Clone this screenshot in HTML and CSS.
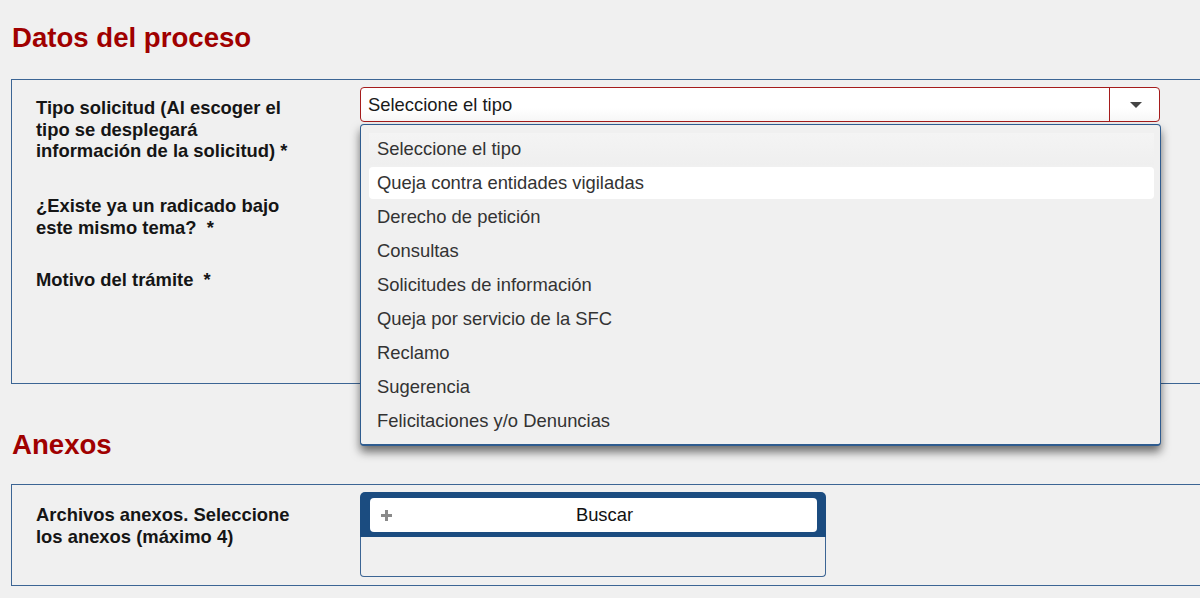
FILE: index.html
```html
<!DOCTYPE html>
<html lang="es">
<head>
<meta charset="utf-8">
<title>Datos del proceso</title>
<link rel="stylesheet" href="styles.css">
</head>
<body>
<div class="page">
  <h2 class="section-title">Datos del proceso</h2>
  <div class="panel panel-process">
    <div class="row row-tipo">
      <div class="label">Tipo solicitud (Al escoger el tipo se desplegará información de la solicitud) *</div>
      <div class="control">
        <div class="select">
          <div class="select-value">Seleccione el tipo</div>
          <div class="select-arrow"><span class="caret"></span></div>
          <ul class="dropdown">
            <li class="opt opt-selected">Seleccione el tipo</li>
            <li class="opt opt-hover">Queja contra entidades vigiladas</li>
            <li class="opt">Derecho de petición</li>
            <li class="opt">Consultas</li>
            <li class="opt">Solicitudes de información</li>
            <li class="opt">Queja por servicio de la SFC</li>
            <li class="opt">Reclamo</li>
            <li class="opt">Sugerencia</li>
            <li class="opt">Felicitaciones y/o Denuncias</li>
          </ul>
        </div>
      </div>
    </div>
    <div class="row row-existe">
      <div class="label">¿Existe ya un radicado bajo este mismo tema? &nbsp;*</div>
      <div class="control"></div>
    </div>
    <div class="row row-motivo">
      <div class="label">Motivo del trámite &nbsp;*</div>
      <div class="control"></div>
    </div>
  </div>

  <h2 class="section-title section-anexos">Anexos</h2>
  <div class="panel panel-anexos">
    <div class="row row-archivos">
      <div class="label">Archivos anexos. Seleccione los anexos (máximo 4)</div>
      <div class="control">
        <div class="upload">
          <div class="upload-header">
            <button class="upload-btn" type="button">
              <span class="plus"></span>
              <span class="btn-text">Buscar</span>
            </button>
          </div>
          <div class="upload-body"></div>
        </div>
      </div>
    </div>
  </div>
</div>
</body>
</html>
```

FILE: styles.css
```css
html, body {
  margin: 0;
  padding: 0;
  background: #f0f0f0;
  overflow: hidden;
}

body {
  font-family: "Liberation Sans", Arial, sans-serif;
  color: #111;
  width: 1200px;
  height: 598px;
}

.page {
  padding: 20px 0 0 11px;
}

.section-title {
  margin: 0 0 23px 1px;
  font-size: 27.6px;
  line-height: 36px;
  font-weight: bold;
  color: #a00000;
}

.section-anexos {
  margin-top: 43px;
  margin-bottom: 21px;
}

.panel {
  width: 1200px;
  border: 1px solid #3c6594;
  box-sizing: border-box;
}

.panel-process {
  height: 305px;
  padding-top: 7px;
}

.panel-anexos {
  height: 102px;
  padding-top: 7px;
}

.row {
  display: flex;
}

.label {
  width: 265px;
  margin-left: 24px;
  margin-right: 59px;
  flex: none;
  font-size: 18.4px;
  line-height: 21.5px;
  font-weight: bold;
  color: #151515;
}

.row-tipo { height: 99px; }
.row-tipo .label { padding-top: 10px; }

.row-existe { height: 74px; }
.row-existe .label { padding-top: 9px; }

.row-motivo .label { padding-top: 9px; }

.row-archivos .label { padding-top: 12px; }

.control {
  width: 801px;
  flex: none;
}

/* select */
.select {
  position: relative;
  display: flex;
  height: 35px;
  border: 1px solid #a51c1c;
  border-radius: 4px;
  box-sizing: border-box;
  background: linear-gradient(#ffffff 60%, #f7f7f7);
  width: 800px;
}

.select-value {
  flex: 1;
  padding-left: 7px;
  font-size: 18.4px;
  line-height: 33px;
  color: #1a1a1a;
}

.select-arrow {
  width: 49px;
  border-left: 1px solid #a51c1c;
  display: flex;
  align-items: center;
  justify-content: center;
}

.caret {
  width: 0;
  height: 0;
  border-left: 6px solid transparent;
  border-right: 6px solid transparent;
  border-top: 6px solid #444;
  margin-left: 2px;
}

.dropdown {
  position: absolute;
  top: 36px;
  left: -1px;
  width: 801px;
  height: 322px;
  box-sizing: border-box;
  margin: 0;
  padding: 8px 6px 0 8px;
  list-style: none;
  background: #f0f0f0;
  border: 1px solid #2f5c8f;
  border-bottom: 2px solid #2f5c8f;
  border-radius: 4px;
  box-shadow: 0 6px 10px rgba(0, 0, 0, 0.55);
  z-index: 10;
}

.opt {
  height: 32px;
  margin-bottom: 2px;
  padding-left: 8px;
  font-size: 18.4px;
  line-height: 32px;
  color: #333;
  border-radius: 4px;
}

.opt-selected {
  background: linear-gradient(#f4f4f4, #efefef);
  border-radius: 0;
}

.opt-hover {
  background: #ffffff;
}

/* upload */
.upload {
  width: 466px;
  height: 85px;
  display: flex;
  flex-direction: column;
}

.upload-header {
  height: 45px;
  background: #1b4c80;
  border-radius: 5px 5px 0 0;
  padding: 6px 9px 5px 10px;
  box-sizing: border-box;
}

.upload-btn {
  width: 100%;
  height: 34px;
  display: flex;
  align-items: center;
  background: #ffffff;
  border: none;
  border-radius: 4px;
  padding: 0 0 0 11px;
  font-family: "Liberation Sans", Arial, sans-serif;
  font-size: 18.4px;
  color: #111;
}

.plus {
  position: relative;
  width: 11px;
  height: 11px;
  flex: none;
}

.plus::before,
.plus::after {
  content: "";
  position: absolute;
  background: #8a8a8a;
}

.plus::before {
  left: 4px;
  top: 0;
  width: 3px;
  height: 11px;
}

.plus::after {
  left: 0;
  top: 4px;
  width: 11px;
  height: 3px;
}

.btn-text {
  flex: 1;
  text-align: center;
}

.upload-body {
  flex: 1;
  border: 1px solid #3c6594;
  border-top: none;
  border-radius: 0 0 4px 4px;
  background: #f0f0f0;
}
```
